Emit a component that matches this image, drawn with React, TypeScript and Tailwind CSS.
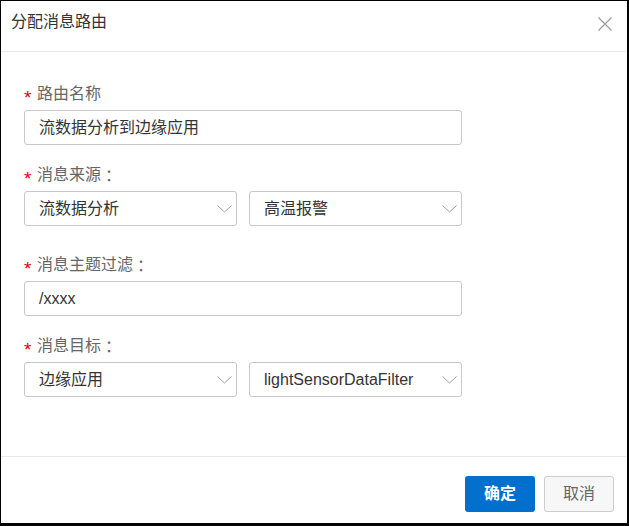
import React from 'react';

const font = { fontFamily: '"Liberation Sans", "Noto Sans CJK SC", sans-serif' };
const jp = { fontFamily: '"Noto Sans CJK JP", sans-serif' };

const Chevron = () => (
  <svg width="15" height="8" viewBox="0 0 15 8" fill="none" className="shrink-0">
    <polyline points="0.5,0.5 7.5,7 14.5,0.5" stroke="#a0a0a0" strokeWidth="1" />
  </svg>
);

const Label = ({ text, colon = true }: { text: string; colon?: boolean }) => (
  <div className="flex items-center h-[22px] mb-[5px] text-[16px] leading-[22px] text-[#666]">
    <span className="text-[#e60012] w-[13px] text-[19px] leading-[22px] relative top-[4px]">*</span>
    <span>{text}</span>
    {colon && <span style={jp}>：</span>}
  </div>
);

const TextField = ({ value }: { value: string }) => (
  <div className="w-[438px] h-[35px] border border-[#c8c8c8] rounded-[3px] pl-[14px] flex items-center text-[16px] text-[#333]">
    {value}
  </div>
);

const Select = ({ value }: { value: string }) => (
  <div className="h-[35px] border border-[#c8c8c8] rounded-[3px] pl-[14px] pr-[4px] flex items-center justify-between text-[16px] text-[#333]">
    <span>{value}</span>
    <Chevron />
  </div>
);

const App: React.FC = () => {
  return (
    <div style={font} className="w-[629px] h-[526px] bg-white border-black border-t border-l border-r-2 border-b-[3px] flex flex-col">
      {/* Header */}
      <div className="h-[51px] border-b border-[#e8e8e8] pl-[10px] pr-[15px] pt-[10px] flex justify-between items-start">
        <span className="text-[16px] leading-[22px] text-[#333]">分配消息路由</span>
        <svg width="14" height="14" viewBox="0 0 14 14" className="mt-[6px]">
          <path d="M0.5 0.5 L13.5 13.5 M13.5 0.5 L0.5 13.5" stroke="#9a9a9a" strokeWidth="1.2" />
        </svg>
      </div>

      {/* Form */}
      <div className="flex-1 pl-[23px] pt-[31px]">
        <Label text="路由名称" colon={false} />
        <TextField value="流数据分析到边缘应用" />

        <div className="mt-[19px]">
          <Label text="消息来源" />
          <div className="w-[438px] grid grid-cols-2 gap-[12px]">
            <Select value="流数据分析" />
            <Select value="高温报警" />
          </div>
        </div>

        <div className="mt-[28px]">
          <Label text="消息主题过滤" />
          <TextField value="/xxxx" />
        </div>

        <div className="mt-[19px]">
          <Label text="消息目标" />
          <div className="w-[438px] grid grid-cols-2 gap-[12px]">
            <Select value="边缘应用" />
            <Select value="lightSensorDataFilter" />
          </div>
        </div>
      </div>

      {/* Footer */}
      <div className="h-[67px] border-t border-[#e8e8e8] pt-[19px] pr-[13px] flex justify-end items-start gap-[9px]">
        <button className="w-[70px] h-[36px] rounded-[3px] bg-[#0070cc] text-white text-[16px] font-bold">确定</button>
        <button className="w-[70px] h-[36px] rounded-[3px] bg-[#f7f7f7] border border-[#cccccc] text-[#666] text-[16px]">取消</button>
      </div>
    </div>
  );
};

export default App;
